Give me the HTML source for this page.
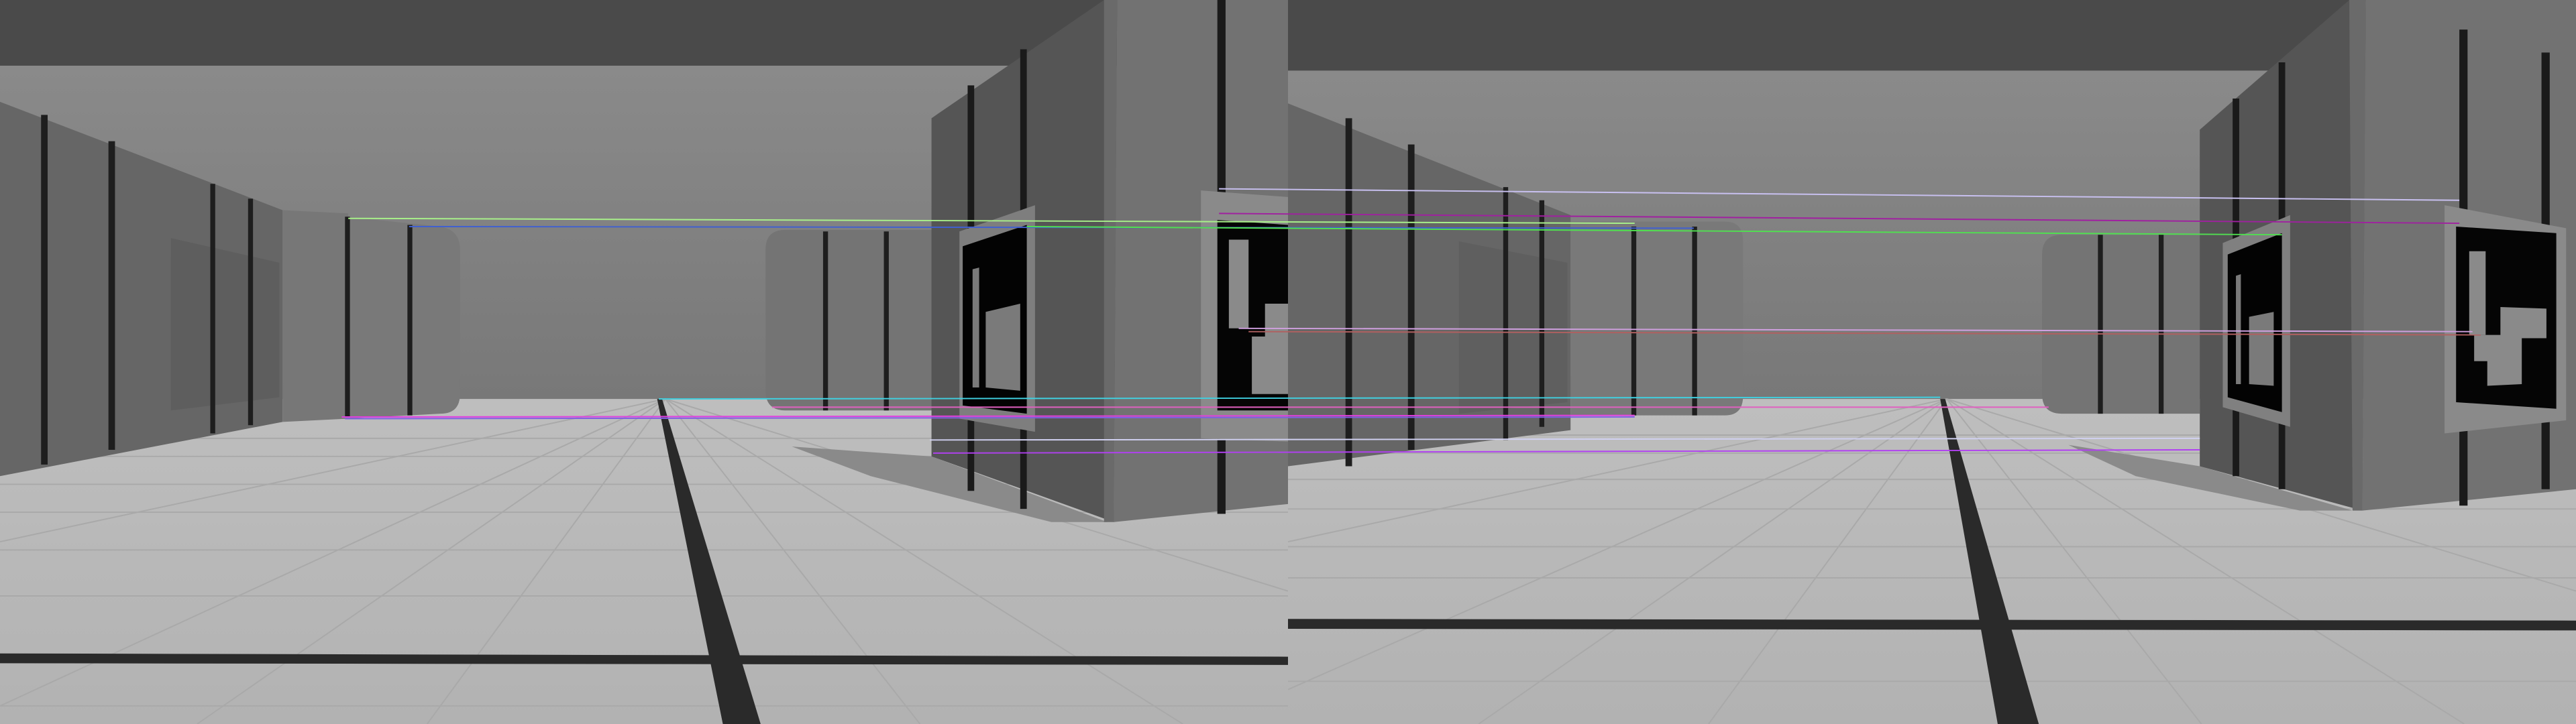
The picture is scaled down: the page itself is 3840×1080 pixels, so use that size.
<!DOCTYPE html>
<html><head><meta charset="utf-8"><style>html,body{margin:0;padding:0;background:#4a4a4a;overflow:hidden}svg{display:block}</style></head><body>
<svg width="3840" height="1080" viewBox="0 0 1568 441" preserveAspectRatio="none" xmlns="http://www.w3.org/2000/svg">
<defs>
<linearGradient id="bw" x1="0" y1="0" x2="0" y2="1"><stop offset="0" stop-color="#8a8a8a"/><stop offset="1" stop-color="#787878"/></linearGradient>
<linearGradient id="fl" x1="0" y1="0" x2="0" y2="1"><stop offset="0" stop-color="#bebebe"/><stop offset="1" stop-color="#b2b2b2"/></linearGradient>
<clipPath id="cl"><rect x="0" y="0" width="784" height="441"/></clipPath>
<clipPath id="cr"><rect x="784" y="0" width="784" height="441"/></clipPath>
</defs>
<g clip-path="url(#cl)">
<rect x="0" y="0" width="784" height="441" fill="#4a4a4a"/>
<rect x="0" y="40" width="784" height="204" fill="url(#bw)"/>
<rect x="0" y="243" width="784" height="198" fill="url(#fl)"/>
<g stroke="#a9a9a9" stroke-width="0.8" fill="none">
<path d="M0 267H784M0 278H784M0 295H784M0 312H784M0 335H784M0 363H784M0 430H784"/>
<path d="M405 243L0 330M405 243L0 430M405 243L120 441M405 243L260 441M405 243L560 441M405 243L720 441M405 243L784 360"/>
</g>
<path d="M400 243L403 243L463 441L440 441Z" fill="#2a2a2a"/>
<path d="M0 398L784 400L784 405L0 404Z" fill="#2a2a2a"/>
<path d="M0 62L172 128L172 257L0 290Z" fill="#666666"/>
<path d="M172 128L212 130L212 255L172 257Z" fill="#777777"/>
<path d="M210 132L268 138Q280 140 280 152L280 240Q280 252 268 252L210 255Z" fill="#797979"/>
<path d="M104 145L170 160L170 242L104 250Z" fill="#5e5e5e"/>
<g fill="#1e1e1e"><path d="M25 70h4v213h-4z"/><path d="M66 86h4v188h-4z"/><path d="M128 112h3v152h-3z"/><path d="M151 121h3v138h-3z"/><path d="M210 132h3v122h-3z"/><path d="M248 137h3v116h-3z"/></g>
<path d="M478 140L570 140L570 250L478 250Q466 250 466 238L466 152Q466 140 478 140Z" fill="#747474"/>
<g fill="#1e1e1e"><path d="M501 141h3v109h-3z"/><path d="M538 141h3v109h-3z"/></g>
<path d="M482 272L567 278L674 318L640 318L530 290Z" fill="#8a8a8a"/>
<path d="M567 72L672 0L680 0L678 318L567 278Z" fill="#555555"/>
<path d="M680 0L784 0L784 307L678 318Z" fill="#727272"/>
<path d="M672 0L680 0L678 318L672 318Z" fill="#6a6a6a"/>
<g fill="#1a1a1a"><path d="M589 52h4v247h-4z"/><path d="M621 30h4v280h-4z"/><path d="M741 0h5v313h-5z"/></g>
<path d="M584 141L630 125L630 263L584 255Z" fill="#7e7e7e"/>
<path d="M586 150L625 137L625 252L586 247Z" fill="#030303"/>
<path d="M592 164L596 163L596 236L592 236Z" fill="#7a7a7a"/>
<path d="M600 190L621 185L621 238L600 236Z" fill="#7a7a7a"/>
<path d="M731 116L784 120L784 269L731 267Z" fill="#8a8a8a"/>
<path d="M741 134L784 137L784 250L741 250Z" fill="#050505"/>
<path d="M748 146L760 146L760 200L748 200Z" fill="#8a8a8a"/>
<path d="M762 205L784 205L784 240L762 240Z" fill="#8a8a8a"/>
<path d="M770 185L784 185L784 205L770 205Z" fill="#8a8a8a"/>
</g>
<g clip-path="url(#cr)">
<rect x="784" y="0" width="784" height="441" fill="#4a4a4a"/>
<rect x="784" y="43" width="784" height="201" fill="url(#bw)"/>
<rect x="784" y="243" width="784" height="198" fill="url(#fl)"/>
<g stroke="#a9a9a9" stroke-width="0.8" fill="none">
<path d="M784 265H1568M784 276H1568M784 292H1568M784 310H1568M784 333H1568M784 352H1568M784 415H1568"/>
<path d="M1185 243L784 330M1185 243L784 420M1185 243L900 441M1185 243L1040 441M1185 243L1340 441M1185 243L1500 441M1185 243L1568 360"/>
</g>
<path d="M1181 243L1184 243L1241 441L1216 441Z" fill="#2a2a2a"/>
<path d="M784 377L1568 378L1568 384L784 383Z" fill="#2a2a2a"/>
<path d="M784 63L956 131L956 262L784 284Z" fill="#666666"/>
<path d="M888 147L954 160L954 245L888 252Z" fill="#5f5f5f"/>
<path d="M956 135L1050 135Q1061 135 1061 147L1061 241Q1061 253 1050 253L956 253Z" fill="#797979"/>
<g fill="#1e1e1e"><path d="M819 72h4v212h-4z"/><path d="M857 88h4v186h-4z"/><path d="M915 114h3v154h-3z"/><path d="M937 122h3v138h-3z"/><path d="M993 138h3v115h-3z"/><path d="M1030 138h3v115h-3z"/></g>
<path d="M1255 143L1339 143L1339 252L1255 252Q1243 252 1243 240L1243 155Q1243 143 1255 143Z" fill="#747474"/>
<g fill="#1e1e1e"><path d="M1277 143h3v109h-3z"/><path d="M1314 143h3v109h-3z"/></g>
<path d="M1259 271L1339 284L1432 311L1400 311L1300 290Z" fill="#8a8a8a"/>
<path d="M1339 79L1430 0L1440 0L1438 311L1339 284Z" fill="#555555"/>
<path d="M1440 0L1568 0L1568 298L1438 311Z" fill="#727272"/>
<path d="M1430 0L1440 0L1438 311L1432 311Z" fill="#6a6a6a"/>
<g fill="#1a1a1a"><path d="M1359 60h4v230h-4z"/><path d="M1387 38h4v260h-4z"/><path d="M1497 18h5v290h-5z"/><path d="M1547 32h5v266h-5z"/></g>
<path d="M1353 148L1394 131L1394 260L1353 248Z" fill="#808080"/>
<path d="M1356 155L1389 142L1389 251L1356 242Z" fill="#030303"/>
<path d="M1361 168L1364 167L1364 234L1361 234Z" fill="#7a7a7a"/>
<path d="M1369 193L1384 190L1384 235L1369 234Z" fill="#7a7a7a"/>
<path d="M1488 125L1562 139L1562 256L1488 264Z" fill="#8a8a8a"/>
<path d="M1495 138L1556 142L1556 249L1495 245Z" fill="#050505"/>
<path d="M1503 153L1513 153L1513 204L1503 204Z" fill="#8a8a8a"/>
<path d="M1506 204L1535 204L1535 234L1514 235L1514 220L1506 220Z" fill="#8a8a8a"/>
<path d="M1522 187L1550 188L1550 206L1522 206Z" fill="#8a8a8a"/>
</g>
<g stroke-width="0.8" fill="none">
<path d="M212 133L995 136" stroke="#a8f08a"/>
<path d="M249 138L1031 139" stroke="#4060d0"/>
<path d="M625 138L1389 143" stroke="#50e050"/>
<path d="M742 115L1497 122" stroke="#c8c0f0"/>
<path d="M742 130L1497 136" stroke="#a020a0"/>
<path d="M754 200L1505 202" stroke="#d0a0e0"/>
<path d="M760 202L1510 204" stroke="#b06060"/>
<path d="M401 243L1181 242" stroke="#40d0e0"/>
<path d="M470 248L1247 248" stroke="#e060c0"/>
<path d="M208 254L995 253" stroke="#e040e0"/>
<path d="M210 255L995 254" stroke="#8060e0"/>
<path d="M566 268L1339 267" stroke="#d0d0f0"/>
<path d="M568 276L1339 274" stroke="#b040f0"/>
</g>
</svg>
</body></html>
